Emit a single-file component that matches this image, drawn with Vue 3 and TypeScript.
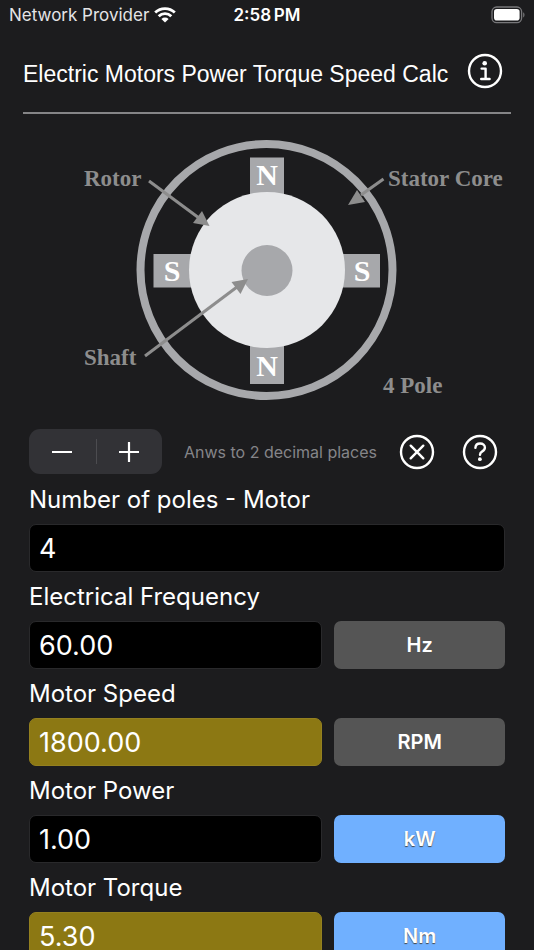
<script setup lang="ts">
import { ref } from 'vue'

interface Field {
  id: string
  label: string
  value: string
  unit?: string
  solved?: boolean
  selectable?: boolean
}

const places = ref(2)
const fields = ref<Field[]>([
  { id: 'poles', label: 'Number of poles - Motor', value: '4' },
  { id: 'frequency', label: 'Electrical Frequency', value: '60.00', unit: 'Hz' },
  { id: 'speed', label: 'Motor Speed', value: '1800.00', unit: 'RPM', solved: true },
  { id: 'power', label: 'Motor Power', value: '1.00', unit: 'kW', selectable: true },
  { id: 'torque', label: 'Motor Torque', value: '5.30', unit: 'Nm', solved: true, selectable: true },
])

function step(delta: number): void {
  places.value = Math.min(8, Math.max(0, places.value + delta))
}

function clearAll(): void {
  fields.value.forEach((field) => (field.value = ''))
}
</script>

<template>
  <div class="screen">
    <div class="status">
      <div class="carrier">
        <span>Network Provider</span>
        <svg class="wifi" viewBox="0 0 22 16" aria-hidden="true">
          <path d="M1.2 5.6a14 14 0 0 1 19.6 0" />
          <path d="M4.7 9.2a9 9 0 0 1 12.6 0" />
          <path class="solid" d="M11 15.6l-3.6-3.7a5.2 5.2 0 0 1 7.2 0z" />
        </svg>
      </div>
      <span class="clock">2:58&#8239;PM</span>
      <svg class="battery" viewBox="0 0 34 18" aria-hidden="true">
        <rect class="shell" x="1" y="1" width="29.6" height="15.6" rx="4.6" />
        <rect class="charge" x="3" y="3" width="25.6" height="11.6" rx="2.8" />
        <path class="tip" d="M32.2 6.2c1.7.8 1.7 4.4 0 5.2z" />
      </svg>
    </div>

    <header class="title-bar">
      <h1>Electric Motors Power Torque Speed Calc</h1>
      <button class="round" type="button" aria-label="Information">
        <svg viewBox="0 0 36 36">
          <circle cx="18" cy="18" r="16" />
          <circle class="dot" cx="17.7" cy="10.2" r="2.3" />
          <path d="M14.6 15.6h4v10.2M14.2 26h8.4" />
        </svg>
      </button>
    </header>

    <main class="content">
      <svg class="diagram" viewBox="0 0 488 280" role="img" aria-label="Four pole motor cross section">
        <circle class="stator" cx="243.5" cy="140" r="126" />
        <g class="pole">
          <rect x="227" y="27.5" width="34" height="44" />
          <rect x="227" y="208" width="34" height="46" />
          <rect x="130.5" y="124" width="46" height="33.5" />
          <rect x="312" y="124" width="45" height="33.5" />
        </g>
        <circle class="rotor" cx="244" cy="140" r="78" />
        <circle class="shaft" cx="244" cy="140.5" r="25.5" />
        <g class="pole-name">
          <text x="244" y="55">N</text>
          <text x="244" y="246">N</text>
          <text x="149" y="151">S</text>
          <text x="339" y="151">S</text>
        </g>
        <g class="arrow">
          <path d="M126 51L176 88" />
          <path d="M360.5 49L338 65" />
          <path d="M122 226L214 157" />
        </g>
        <g class="head">
          <path d="M186.5 96L170 93L179 81z" />
          <path d="M325 75L334 60L342 72z" />
          <path d="M225 149L208.5 152L217.5 164z" />
        </g>
        <g class="caption">
          <text x="61" y="56">Rotor</text>
          <text x="365" y="56">Stator Core</text>
          <text x="61" y="235">Shaft</text>
          <text x="360" y="263">4 Pole</text>
        </g>
      </svg>

      <div class="tools">
        <div class="stepper">
          <button type="button" aria-label="Fewer decimal places" @click="step(-1)">
            <svg viewBox="0 0 20 20"><path d="M0.5 10h19" /></svg>
          </button>
          <button type="button" aria-label="More decimal places" @click="step(1)">
            <svg viewBox="0 0 20 20"><path d="M0.5 10h19M10 0.5v19" /></svg>
          </button>
        </div>
        <span class="places">Anws to {{ places }} decimal places</span>
        <div class="actions">
          <button class="round" type="button" aria-label="Clear" @click="clearAll">
            <svg viewBox="0 0 36 36">
              <circle cx="18" cy="18" r="16" />
              <path d="M11.7 11.7l12.6 12.6M24.3 11.7l-12.6 12.6" />
            </svg>
          </button>
          <button class="round" type="button" aria-label="Help">
            <svg viewBox="0 0 36 36">
              <circle cx="18" cy="18" r="16" />
              <path d="M13.4 13.8c.2-2.7 2-4.3 4.7-4.3 2.800 0 4.800 1.600 4.800 4 0 1.800-.9 2.900-2.600 3.900-1.700 1-2.300 1.700-2.300 3.400" />
              <circle class="dot" cx="17.9" cy="25.2" r="1.9" />
            </svg>
          </button>
        </div>
      </div>

      <form class="fields" @submit.prevent>
        <div v-for="field in fields" :key="field.id" class="field">
          <label :for="field.id">{{ field.label }}</label>
          <div class="row" :class="{ single: !field.unit }">
            <input
              :id="field.id"
              v-model="field.value"
              type="text"
              inputmode="decimal"
              :class="{ solved: field.solved }"
            />
            <button v-if="field.unit" type="button" class="unit" :class="{ selectable: field.selectable }">
              {{ field.unit }}
            </button>
          </div>
        </div>
      </form>
    </main>
  </div>
</template>

<style>
body {
  margin: 0;
  background: #1c1c1e;
}
</style>

<style scoped>
.screen {
  box-sizing: border-box;
  display: flex;
  flex-direction: column;
  height: 100vh;
  background: #1c1c1e;
  color: #fff;
  font-family: Inter, "Liberation Sans", sans-serif;
}

button {
  margin: 0;
  padding: 0;
  border: 0;
  background: none;
  color: inherit;
  font: inherit;
  cursor: pointer;
}

svg {
  display: block;
}

.status {
  display: grid;
  grid-template-columns: 1fr auto 1fr;
  align-items: center;
  flex: none;
  height: 30px;
  padding: 0 9px 0 9px;
  font-size: 17px;
}

.carrier {
  display: flex;
  align-items: center;
  gap: 5px;
  color: #e4e4e6;
}

.wifi {
  width: 22px;
  height: 16px;
  fill: none;
  stroke: #fff;
  stroke-width: 2.8;
}

.wifi .solid {
  fill: #fff;
  stroke: none;
}

.clock {
  font-weight: 600;
}

.battery {
  justify-self: end;
  width: 34px;
  height: 18px;
}

.shell {
  fill: none;
  stroke: #77777a;
  stroke-width: 1.3;
}

.charge {
  fill: #fff;
}

.tip {
  fill: #77777a;
}

.title-bar {
  display: flex;
  align-items: center;
  justify-content: space-between;
  flex: none;
  height: 82px;
  margin: 0 23px;
  padding-right: 8px;
  border-bottom: 2px solid #858587;
}

h1 {
  margin: 0;
  padding-top: 6px;
  font: 400 23px/28px "Liberation Sans", sans-serif;
  white-space: nowrap;
}

.round {
  flex: none;
  width: 36px;
  height: 36px;
}

.round svg {
  width: 36px;
  height: 36px;
  fill: none;
  stroke: #fff;
  stroke-width: 2.4;
  stroke-linecap: round;
  stroke-linejoin: round;
}

.round .dot {
  fill: #fff;
  stroke: none;
}

.content {
  flex: 1;
  min-height: 0;
  overflow-y: auto;
  scrollbar-width: none;
  padding: 16px 23px 24px;
}

.diagram {
  width: 100%;
  font-family: "Liberation Serif", serif;
  font-weight: 700;
}

.stator {
  fill: none;
  stroke: #a7a8ab;
  stroke-width: 8;
}

.pole,
.shaft {
  fill: #a7a8ab;
}

.rotor {
  fill: #e6e7e9;
}

.pole-name {
  fill: #fff;
  font-size: 30px;
  text-anchor: middle;
}

.arrow {
  stroke: #8d8d8d;
  stroke-width: 3;
}

.head,
.caption {
  fill: #8d8d8d;
}

.caption {
  font-size: 23px;
}

.tools {
  display: flex;
  align-items: center;
  justify-content: space-between;
  height: 45px;
  margin-top: 19px;
  padding: 0 13px 0 6px;
}

.stepper {
  display: flex;
  width: 133px;
  height: 45px;
  border-radius: 11px;
  background: #323236;
}

.stepper button {
  display: grid;
  place-items: center;
  position: relative;
  flex: 1;
}

.stepper button + button::before {
  content: "";
  position: absolute;
  left: 0;
  top: 10px;
  bottom: 10px;
  width: 1px;
  background: #4c4c50;
}

.stepper svg {
  width: 20px;
  height: 20px;
  stroke: #fff;
  stroke-width: 2.2;
  stroke-linecap: round;
}

.places {
  color: #858589;
  font-size: 16px;
}

.actions {
  display: flex;
  gap: 27px;
}

.fields {
  padding: 1px 6px 0;
}

.field {
  padding-top: 10px;
}

label {
  display: block;
  height: 30px;
  margin-bottom: 9px;
  font-size: 24px;
  line-height: 30px;
}

.row {
  display: grid;
  grid-template-columns: 294fr 171fr;
  gap: 12px;
}

.row.single {
  grid-template-columns: 1fr;
}

input {
  box-sizing: border-box;
  width: 100%;
  min-width: 0;
  height: 48px;
  margin: 0;
  padding: 0 9px;
  border: 1px solid #29292b;
  border-radius: 7px;
  outline: 0;
  background: #000;
  color: #fff;
  font: 400 27px/34px Inter, sans-serif;
}

input.solved {
  border-color: #94801f;
  background: #8c7813;
}

.unit {
  height: 48px;
  border-radius: 7px;
  background: #555;
  font-size: 20px;
  font-weight: 600;
}

.unit.selectable {
  background: #70b0ff;
  text-shadow: 0 1px 1px #444;
}
</style>
